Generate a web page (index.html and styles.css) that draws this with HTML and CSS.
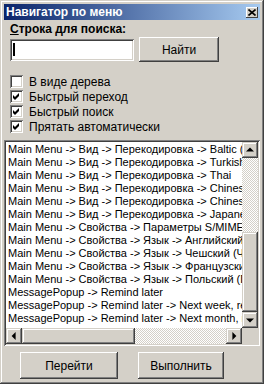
FILE: index.html
```html
<!DOCTYPE html>
<html lang="ru">
<head>
  <meta charset="UTF-8">
  <title>Навигатор по меню</title>
  <link rel="stylesheet" href="styles.css">
</head>
<body>

  <div class="okno">
    <div class="zagolovok">
      <span class="nazvanie">Навигатор по меню</span>
      <span class="zakryt">
        <svg width="8" height="7" viewBox="0 0 8 7"><path d="M0.5 0.5 L7.5 6.5 M7.5 0.5 L0.5 6.5" stroke="#000" stroke-width="1.6"/></svg>
      </span>
    </div>

    <div class="klient">
      <div class="metka"><u>С</u>трока для поиска:</div>

      <div class="stroka-poiska">
        <div class="pole"><span class="kursor"></span></div>
        <div class="knopka knopka-nayti">Найти</div>
      </div>

      <div class="opcii">
        <div class="opciya"><span class="flag"></span>В виде дерева</div>
        <div class="opciya"><span class="flag"><svg width="13" height="13" viewBox="0 0 13 13"><polygon points="3,5 5,7 9,3 9,6 5,10 3,8" fill="#000"/></svg></span>Быстрый переход</div>
        <div class="opciya"><span class="flag"><svg width="13" height="13" viewBox="0 0 13 13"><polygon points="3,5 5,7 9,3 9,6 5,10 3,8" fill="#000"/></svg></span>Быстрый поиск</div>
        <div class="opciya"><span class="flag"><svg width="13" height="13" viewBox="0 0 13 13"><polygon points="3,5 5,7 9,3 9,6 5,10 3,8" fill="#000"/></svg></span>Прятать автоматически</div>
      </div>

      <div class="spisok">
        <div class="punkty">
          <div>Main Menu -&gt; Вид -&gt; Перекодировка -&gt; Baltic (Windows)</div>
          <div>Main Menu -&gt; Вид -&gt; Перекодировка -&gt; Turkish (Windows)</div>
          <div>Main Menu -&gt; Вид -&gt; Перекодировка -&gt; Thai</div>
          <div>Main Menu -&gt; Вид -&gt; Перекодировка -&gt; Chinese Simplified</div>
          <div>Main Menu -&gt; Вид -&gt; Перекодировка -&gt; Chinese Traditional</div>
          <div>Main Menu -&gt; Вид -&gt; Перекодировка -&gt; Japanese (Shift-JIS)</div>
          <div>Main Menu -&gt; Свойства -&gt; Параметры S/MIME</div>
          <div>Main Menu -&gt; Свойства -&gt; Язык -&gt; Английский (США)</div>
          <div>Main Menu -&gt; Свойства -&gt; Язык -&gt; Чешский (Чехия)</div>
          <div>Main Menu -&gt; Свойства -&gt; Язык -&gt; Французский</div>
          <div>Main Menu -&gt; Свойства -&gt; Язык -&gt; Польский (Польша)</div>
          <div>MessagePopup -&gt; Remind later</div>
          <div>MessagePopup -&gt; Remind later -&gt; Next week, remind me</div>
          <div>MessagePopup -&gt; Remind later -&gt; Next month, remind me</div>
        </div>

        <div class="vprokrutka">
          <div class="strelka vverh"></div>
          <div class="dorozhka"><div class="polzunok v"></div></div>
          <div class="strelka vniz"></div>
        </div>

        <div class="gprokrutka">
          <div class="strelka vlevo"></div>
          <div class="dorozhka"><div class="polzunok g"></div></div>
          <div class="strelka vpravo"></div>
        </div>

        <div class="ugol"></div>
      </div>

      <div class="deystviya">
        <div class="knopka knopka-pereyti">Перейти</div>
        <div class="knopka knopka-vypolnit">Выполнить</div>
      </div>
    </div>
  </div>

</body>
</html>
```

FILE: styles.css
```css
:root {
  --fon: #d4d0c8;
  --ten: #808080;
  --temny: #404040;
  --svet: #ffffff;
}

body {
  margin: 0;
  font-family: "Liberation Sans", Arial, sans-serif;
  font-size: 12px;
  color: #000;
  background: var(--fon);
}

.okno {
  width: 264px;
  height: 384px;
  box-sizing: border-box;
  padding: 4px;
  background: var(--fon);
  box-shadow: inset -1px -1px var(--temny), inset 1px 1px var(--fon),
              inset -2px -2px var(--ten), inset 2px 2px var(--svet);
  display: flex;
  flex-direction: column;
}

.zagolovok {
  height: 16px;
  display: flex;
  align-items: center;
  padding: 0 2px;
  background: linear-gradient(90deg, #0a246a, #a6caf0);
  color: #fff;
  font-weight: bold;
  font-size: 12px;
}

.nazvanie {
  flex: 1;
}

.zakryt {
  width: 12px;
  height: 11px;
  display: flex;
  align-items: center;
  justify-content: center;
  background: var(--fon);
  box-shadow: inset -1px -1px var(--temny), inset 1px 1px var(--svet);
}

.klient {
  flex: 1;
  display: flex;
  flex-direction: column;
}

.metka {
  margin: 3px 0 0 6px;
  line-height: 13px;
  font-weight: bold;
}

.stroka-poiska {
  display: flex;
  align-items: center;
  gap: 5px;
  height: 25px;
  margin: 1px 0 0 6px;
}

.pole {
  width: 124px;
  height: 22px;
  box-sizing: border-box;
  background: #fff;
  box-shadow: inset 1px 1px var(--ten), inset -1px -1px var(--svet),
              inset 2px 2px var(--temny), inset -2px -2px var(--fon);
  display: flex;
  align-items: center;
  padding-left: 3px;
}

.kursor {
  width: 2px;
  height: 13px;
  background: #000;
}

.knopka {
  display: flex;
  align-items: center;
  justify-content: center;
  box-sizing: border-box;
  background: var(--fon);
  box-shadow: inset -1px -1px var(--temny), inset 1px 1px var(--svet),
              inset -2px -2px var(--ten), inset 2px 2px var(--fon);
}

.knopka-nayti {
  width: 80px;
  height: 25px;
}

.opcii {
  margin: 12px 0 0 6px;
}

.opciya {
  height: 15px;
  display: flex;
  align-items: center;
  gap: 6px;
}

.flag {
  width: 13px;
  height: 13px;
  background: #fff;
  box-shadow: inset 1px 1px var(--ten), inset -1px -1px var(--svet),
              inset 2px 2px var(--temny), inset -2px -2px var(--fon);
}

.flag svg {
  display: block;
}

.spisok {
  margin-top: 6px;
  height: 206px;
  box-sizing: border-box;
  padding: 2px;
  background: #fff;
  box-shadow: inset 1px 1px var(--ten), inset -1px -1px var(--svet),
              inset 2px 2px var(--temny), inset -2px -2px var(--fon);
  display: grid;
  grid-template-columns: 1fr 16px;
  grid-template-rows: 1fr 16px;
}

.punkty {
  overflow: hidden;
  padding: 1px 0 0 2px;
  font-size: 11px;
  line-height: 13px;
  white-space: nowrap;
}

.vprokrutka {
  display: flex;
  flex-direction: column;
}

.gprokrutka {
  display: flex;
}

.dorozhka {
  flex: 1;
  display: flex;
  background: repeating-conic-gradient(#fff 0 25%, var(--fon) 0 50%) 0 0 / 2px 2px;
}

.vprokrutka .dorozhka {
  flex-direction: column;
}

.polzunok,
.strelka {
  background: var(--fon);
  box-shadow: inset -1px -1px var(--temny), inset 1px 1px var(--fon),
              inset -2px -2px var(--ten), inset 2px 2px var(--svet);
}

.polzunok.v {
  margin-top: 74px;
  height: 80px;
}

.polzunok.g {
  width: 113px;
}

.strelka {
  width: 16px;
  height: 16px;
  position: relative;
}

.strelka::before {
  content: "";
  position: absolute;
  left: 50%;
  top: 50%;
  width: 0;
  height: 0;
  border: 4px solid transparent;
}

.vverh::before {
  border-top: 0;
  border-bottom-color: #000;
  transform: translate(-50%, -60%);
}

.vniz::before {
  border-bottom: 0;
  border-top-color: #000;
  transform: translate(-50%, -40%);
}

.vlevo::before {
  border-left: 0;
  border-right-color: #000;
  transform: translate(-60%, -50%);
}

.vpravo::before {
  border-right: 0;
  border-left-color: #000;
  transform: translate(-40%, -50%);
}

.ugol {
  background: var(--fon);
}

.deystviya {
  display: flex;
  margin-top: 6px;
}

.knopka-pereyti {
  width: 98px;
  height: 27px;
  margin-left: 16px;
}

.knopka-vypolnit {
  width: 86px;
  height: 27px;
  margin-left: 20px;
}
```
